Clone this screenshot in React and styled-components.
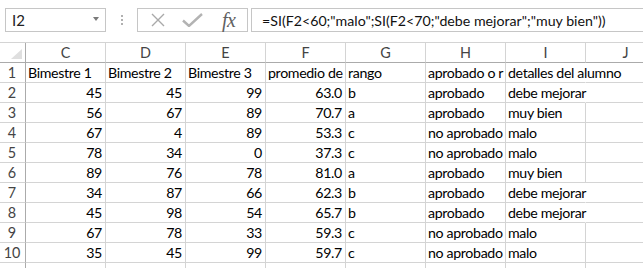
import React from "react";
import styled, { createGlobalStyle } from "styled-components";

const GlobalStyle = createGlobalStyle`
  html, body {
    margin: 0;
    padding: 0;
    background: #fff;
    overflow: hidden;
  }
  body {
    font-family: Lato, "Liberation Sans", sans-serif;
  }
`;

const Window = styled.div`
  width: 643px;
  height: 268px;
  overflow: hidden;
  background: #fff;
`;

const Toolbar = styled.div`
  display: flex;
  align-items: center;
  height: 42px;
  padding: 8px 0 10px 5px;
  box-sizing: border-box;
`;

const NameBox = styled.div`
  display: flex;
  align-items: center;
  justify-content: space-between;
  width: 101px;
  height: 24px;
  box-sizing: border-box;
  border: 1px solid #c6c6c6;
  padding: 0 6px 0 6px;
  font-size: 15px;
  color: #222;
`;

const Caret = styled.span`
  width: 0;
  height: 0;
  border-left: 3.5px solid transparent;
  border-right: 3.5px solid transparent;
  border-top: 4px solid #7a7a7a;
  margin-top: -2px;
`;

const Grip = styled.div`
  display: flex;
  flex-direction: column;
  gap: 2px;
  margin: 0 14px 0 15px;
  span {
    width: 2px;
    height: 2px;
    background: #b0b0b0;
  }
`;

const ButtonBox = styled.div`
  display: flex;
  align-items: center;
  width: 111px;
  height: 24px;
  box-sizing: border-box;
  border: 1px solid #c6c6c6;
  padding-left: 13px;
  gap: 17px;
`;

const Fx = styled.span`
  font-family: "Liberation Serif", "DejaVu Serif", serif;
  font-style: italic;
  font-size: 20px;
  color: #616161;
  margin-left: 2px;
  letter-spacing: -0.5px;
`;

const FormulaBar = styled.div`
  flex: 1;
  display: flex;
  align-items: center;
  height: 24px;
  box-sizing: border-box;
  margin-left: 3px;
  border: 1px solid #c6c6c6;
  border-right: none;
  padding-left: 10px;
  font-size: 14.2px;
  color: #111;
  white-space: nowrap;
  overflow: hidden;
`;

const Sheet = styled.div`
  display: grid;
  grid-template-columns: 26px repeat(8, 80px);
  grid-auto-rows: 20px;
  width: 666px;
  border-top: 1px solid #d4d4d4;
`;

const Corner = styled.div`
  display: flex;
  align-items: flex-end;
  justify-content: flex-end;
  padding: 0 3px 3px 0;
  box-sizing: border-box;
  border-right: 1px solid #ababab;
  border-bottom: 1px solid #ababab;
`;

const ColHead = styled.div`
  display: flex;
  align-items: center;
  justify-content: center;
  box-sizing: border-box;
  border-right: 1px solid #d4d4d4;
  border-bottom: 1px solid #ababab;
  font-size: 14.4px;
  color: #444;
  overflow: hidden;
`;

const RowHead = styled.div`
  display: flex;
  align-items: center;
  justify-content: center;
  box-sizing: border-box;
  border-right: 1px solid #ababab;
  border-bottom: 1px solid #d4d4d4;
  font-size: 14.4px;
  color: #444;
  padding-right: 1px;
`;

const Cell = styled.div`
  box-sizing: border-box;
  border-right: 1px solid ${({ $spill }) => ($spill ? "transparent" : "#d4d4d4")};
  border-bottom: 1px solid #d4d4d4;
  padding: 0 ${({ $num }) => ($num ? "3px" : "0")} 0 2px;
  text-align: ${({ $num }) => ($num ? "right" : "left")};
  line-height: 20px;
  font-size: 14.2px;
  letter-spacing: -0.35px;
  color: #000;
  white-space: nowrap;
  overflow: ${({ $spill }) => ($spill ? "visible" : "hidden")};
  text-overflow: clip;
`;

const COLS = ["C", "D", "E", "F", "G", "H", "I", "J"];

const ROWS = [
  ["Bimestre 1", "Bimestre 2", "Bimestre 3", "promedio de", "rango", "aprobado o r", "detalles del alumno", ""],
  ["45", "45", "99", "63.0", "b", "aprobado", "debe mejorar", ""],
  ["56", "67", "89", "70.7", "a", "aprobado", "muy bien", ""],
  ["67", "4", "89", "53.3", "c", "no aprobado", "malo", ""],
  ["78", "34", "0", "37.3", "c", "no aprobado", "malo", ""],
  ["89", "76", "78", "81.0", "a", "aprobado", "muy bien", ""],
  ["34", "87", "66", "62.3", "b", "aprobado", "debe mejorar", ""],
  ["45", "98", "54", "65.7", "b", "aprobado", "debe mejorar", ""],
  ["67", "78", "33", "59.3", "c", "no aprobado", "malo", ""],
  ["35", "45", "99", "59.7", "c", "no aprobado", "malo", ""],
];

// the next row only peeks in under the window edge, its label is not visible
const EMPTY_ROW = ["", "", "", "", "", "", "", ""];

const isNum = (v) => /^[\d.]+$/.test(v);
// text runs into the next column when it is long and the neighbour is empty
const spills = (row, i) => !isNum(row[i]) && row[i].length > 11 && row[i + 1] === "";

const App = () => (
  <Window>
    <GlobalStyle />
    <Toolbar>
      <NameBox>
        I2
        <Caret />
      </NameBox>
      <Grip>
        <span />
        <span />
        <span />
      </Grip>
      <ButtonBox>
        <svg width="14" height="14" viewBox="0 0 14 14">
          <path d="M1 1 L13 13 M13 1 L1 13" stroke="#a9a9a9" strokeWidth="1.4" fill="none" />
        </svg>
        <svg width="21" height="14" viewBox="0 0 21 14">
          <path d="M1 7.5 L7 13 L20 1" stroke="#b3b3b3" strokeWidth="2.4" fill="none" />
        </svg>
        <Fx>fx</Fx>
      </ButtonBox>
      <FormulaBar>=SI(F2&lt;60;"malo";SI(F2&lt;70;"debe mejorar";"muy bien"))</FormulaBar>
    </Toolbar>
    <Sheet>
      <Corner>
        <svg width="11" height="10" viewBox="0 0 11 10">
          <path d="M11 0 L11 10 L0 10 Z" fill="#dfdfdf" />
        </svg>
      </Corner>
      {COLS.map((c) => (
        <ColHead key={c}>{c}</ColHead>
      ))}
      {ROWS.map((row, r) => (
        <React.Fragment key={r}>
          <RowHead>{r + 1}</RowHead>
          {row.map((v, i) => (
            <Cell key={i} $num={isNum(v)} $spill={spills(row, i)}>
              {v}
            </Cell>
          ))}
        </React.Fragment>
      ))}
      <RowHead />
      {EMPTY_ROW.map((v, i) => (
        <Cell key={i} />
      ))}
    </Sheet>
  </Window>
);

export default App;
